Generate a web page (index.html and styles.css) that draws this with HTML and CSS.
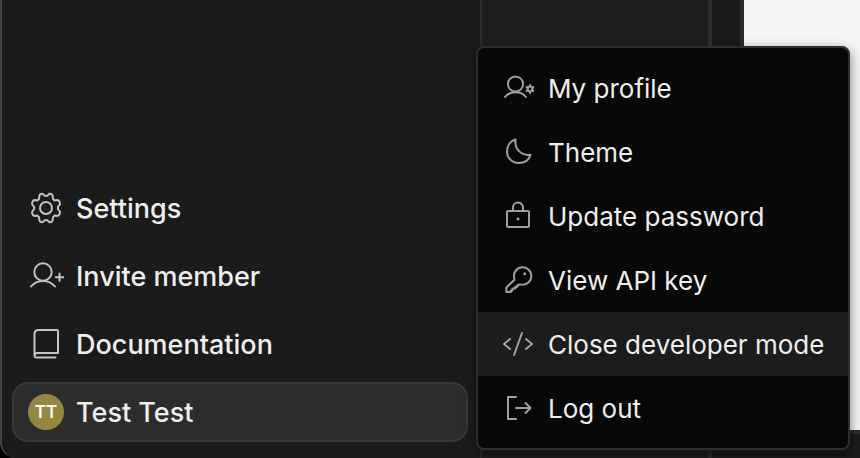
FILE: index.html
```html
<!DOCTYPE html>
<html lang="en">
<head>
    <meta charset="UTF-8">
    <meta name="viewport" content="width=device-width, initial-scale=1.0">
    <title>Workspace</title>
    <link rel="stylesheet" href="styles.css">
</head>
<body>
    <div class="app">
        <nav class="sidebar">
            <a class="nav-item" href="#settings">
                <svg class="nav-icon" viewBox="0 0 36 36">
                    <circle cx="18" cy="18" r="6"/>
                    <path d="M15.2 4.2Q13.6 3.4 12.2 4.4Q11.3 5 11.3 7Q11.3 9.5 9.5 10.4L6.6 10Q5 10.2 4.2 12.3Q3.5 14 4.6 15Q6.2 16.2 6.2 18Q6.2 19.8 4.6 21Q3.5 22 4.2 23.7Q5 25.8 6.6 26L9.5 25.6Q11.3 26.5 11.3 29Q11.3 31 12.2 31.6Q13.6 32.6 15.2 31.8Q16.2 29.9 18 29.9Q19.8 29.9 20.8 31.8Q22.4 32.6 23.8 31.6Q24.7 31 24.7 29Q24.7 26.5 26.5 25.6L29.4 26Q31 25.8 31.8 23.7Q32.5 22 31.4 21Q29.8 19.8 29.8 18Q29.8 16.2 31.4 15Q32.5 14 31.8 12.3Q31 10.2 29.4 10L26.5 10.4Q24.7 9.5 24.7 7Q24.7 5 23.8 4.4Q22.4 3.4 20.8 4.2Q19.8 6.1 18 6.1Q16.2 6.1 15.2 4.2Z"/>
                </svg>
                Settings
            </a>
            <a class="nav-item" href="#invite">
                <svg class="nav-icon" viewBox="0 0 36 36">
                    <circle cx="15" cy="14" r="8.7"/>
                    <path d="M3 28.500C9 21 21 21 27 28.500M31.500 15.500v7.500M27.800 19.300h7.500"/>
                </svg>
                Invite member
            </a>
            <a class="nav-item" href="#docs">
                <svg class="nav-icon" viewBox="0 0 36 36">
                    <path d="M6.500 29.500V8Q6.500 4 10.500 4H29Q30 4 30 5V27H9Q6.500 27 6.500 29.500Q6.500 31.500 8.500 31.500H27.500"/>
                </svg>
                Documentation
            </a>
            <button class="nav-item account" type="button">
                <span class="avatar">TT</span>
                Test Test
            </button>
        </nav>
        <div class="panel"></div>
        <main class="workspace">
            <div class="page"></div>
        </main>

        <div class="menu">
            <button class="menu-item" type="button">
                <svg class="menu-icon" viewBox="0 0 32 32">
                    <circle cx="13.500" cy="12" r="7.6"/>
                    <path d="M3 25C8 18.500 19 18.500 24 25"/>
                    <circle cx="28" cy="17" r="2.400"/>
                    <path d="M28 14.500v-1.500M28 19.500v1.500M25.800 15.800l-1.200-.7M30.200 18.200l1.200.7M25.800 18.200l-1.200.7M30.200 15.800l1.200-.7"/>
                </svg>
                My profile
            </button>
            <button class="menu-item" type="button">
                <svg class="menu-icon" viewBox="0 0 32 32">
                    <path d="M13.600 3.500C8 5 5 10 5 15.200C5 22 10 27 16.500 27C22.500 27 27 24.200 28.500 18.700C19.500 20 12 13 13.600 3.500Z"/>
                </svg>
                Theme
            </button>
            <button class="menu-item" type="button">
                <svg class="menu-icon" viewBox="0 0 32 32">
                    <rect x="5" y="11" width="22" height="16" rx="1"/>
                    <path d="M11 11V7.500a5 5 0 0 1 10 0V11"/>
                    <circle class="dot" cx="16" cy="19" r="1.500"/>
                </svg>
                Update password
            </button>
            <button class="menu-item" type="button">
                <svg class="menu-icon" viewBox="0 0 32 32">
                    <path d="M12.300 14.500A8.700 8.700 0 1 1 18.300 20.400L15.500 21V22.700H13.300V24.500H10.500V26.500H8.800V28H4.300V23.500L12.300 16Z"/>
                    <circle class="dot" cx="22.700" cy="9.700" r="1.500"/>
                </svg>
                View API key
            </button>
            <button class="menu-item active" type="button">
                <svg class="menu-icon" viewBox="0 0 32 32">
                    <path d="M8 11L2 16L8 21M24 11L30 16L24 21M20 5L12 27"/>
                </svg>
                Close developer mode
            </button>
            <button class="menu-item" type="button">
                <svg class="menu-icon" viewBox="0 0 32 32">
                    <path d="M14 5H6V27H14M14 16H28.500M23.500 11L28.500 16L23.500 21"/>
                </svg>
                Log out
            </button>
        </div>
    </div>
</body>
</html>
```

FILE: styles.css
```css
* {
    box-sizing: border-box;
}

body {
    margin: 0;
    background-color: #000;
    color: #eee;
    font-family: Inter, "Liberation Sans", sans-serif;
}

.app {
    position: relative;
    display: flex;
    height: 100vh;
    overflow: hidden;
    background-color: #1b1b1b;
    border-left: 2px solid #444;
    border-bottom-left-radius: 16px;
}

.sidebar {
    display: flex;
    flex: 0 0 478px;
    flex-direction: column;
    justify-content: flex-end;
    gap: 8px;
    padding: 16px 12px 16px 10px;
}

.nav-item {
    display: flex;
    align-items: center;
    gap: 12px;
    height: 60px;
    padding: 0 14px;
    border: 2px solid transparent;
    border-radius: 16px;
    background: none;
    color: inherit;
    font-family: inherit;
    font-size: 27px;
    font-weight: 500;
    text-align: left;
    text-decoration: none;
    white-space: nowrap;
}

.account {
    background-color: #2c2c2c;
    border-color: #3a3a3a;
}

.nav-icon {
    flex: none;
    width: 36px;
    height: 36px;
    fill: none;
    stroke: #c4c4c4;
    stroke-width: 2;
    stroke-linecap: round;
    stroke-linejoin: round;
}

.avatar {
    display: flex;
    flex: none;
    align-items: center;
    justify-content: center;
    width: 36px;
    height: 36px;
    border-radius: 50%;
    background-color: #968740;
    color: #fff;
    font-size: 17px;
    font-weight: 600;
}

.panel {
    flex: 0 0 232px;
    background-color: #1f1f1f;
    border-left: 2px solid #2c2c2c;
    border-right: 4px solid #2c2c2c;
}

.workspace {
    display: flex;
    flex: 1;
    padding: 0 0 24px 28px;
}

.page {
    flex: 1;
    background-color: #f4f4f4;
    border-left: 4px solid #2c2c2c;
    border-bottom: 4px solid #2c2c2c;
}

/* account menu, opens over the panel */
.menu {
    position: absolute;
    left: 474px;
    right: 10px;
    bottom: 8px;
    padding: 8px 0;
    background-color: #080808;
    border: 2px solid #2e2e2e;
    border-radius: 8px;
    box-shadow: 0 4px 12px rgba(0, 0, 0, 0.5);
}

.menu-item {
    display: flex;
    align-items: center;
    gap: 14px;
    width: 100%;
    height: 64px;
    padding: 0 24px;
    border: none;
    background: none;
    color: inherit;
    font-family: inherit;
    font-size: 26px;
    text-align: left;
    white-space: nowrap;
}

.menu-item.active {
    background-color: #1c1c1c;
}

.menu-icon {
    flex: none;
    width: 32px;
    height: 32px;
    fill: none;
    stroke: #a0a0a0;
    stroke-width: 2;
    stroke-linecap: round;
    stroke-linejoin: round;
}

.dot {
    fill: #a0a0a0;
    stroke: none;
}
```
